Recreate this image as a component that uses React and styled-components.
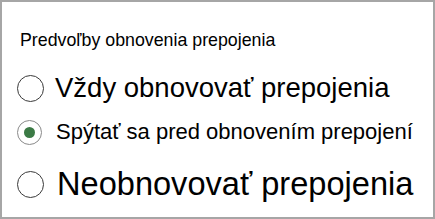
import React from "react";
import styled, { createGlobalStyle } from "styled-components";

const Global = createGlobalStyle`
  html, body { margin: 0; padding: 0; background: #fff; }
  * { box-sizing: border-box; }
`;

const Panel = styled.div`
  width: 435px;
  height: 219px;
  border: 2px solid #a6a6a6;
  background: #fff;
  padding: 28px 0 0 15px;
  font-family: "Liberation Sans", Arial, sans-serif;
  color: #000;
  display: flex;
  flex-direction: column;
`;

const Title = styled.div`
  font-size: 17.8px;
  line-height: 20px;
  margin-left: 3px;
  margin-bottom: 22px;
`;

const Options = styled.div`
  display: flex;
  flex-direction: column;
`;

const Row = styled.label`
  display: flex;
  align-items: center;
  gap: ${(p) => p.gap}px;
  height: ${(p) => p.h}px;
  font-size: ${(p) => p.size}px;
  line-height: 1;
  white-space: nowrap;
`;

const Radio = styled.span`
  width: ${(p) => p.d}px;
  height: ${(p) => p.d}px;
  border-radius: 50%;
  border: 1.3px solid ${(p) => (p.checked ? "#8a8a8a" : "#3a3a3a")};
  display: flex;
  align-items: center;
  justify-content: center;
  flex: none;
  &::after {
    content: "";
    display: ${(p) => (p.checked ? "block" : "none")};
    width: ${(p) => p.dot}px;
    height: ${(p) => p.dot}px;
    border-radius: 50%;
    background: #3b7a45;
  }
`;

export default function App() {
  return (
    <>
      <Global />
      <Panel>
        <Title>Predvoľby obnovenia prepojenia</Title>
        <Options>
          <Row h={32} size={27.5} gap={11}>
            <Radio d={27} />
            Vždy obnovovať prepojenia
          </Row>
          <Row h={56} size={22} gap={14}>
            <Radio d={25} dot={11} checked />
            Spýtať sa pred obnovením prepojení
          </Row>
          <Row h={48} size={32.6} gap={13}>
            <Radio d={27} />
            Neobnovovať prepojenia
          </Row>
        </Options>
      </Panel>
    </>
  );
}
